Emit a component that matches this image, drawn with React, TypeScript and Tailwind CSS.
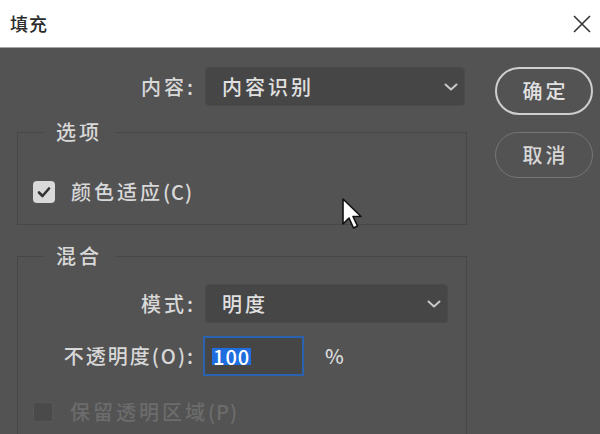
const font = { fontFamily: '"Noto Sans CJK SC", "Noto Sans", sans-serif' };

const Chevron = () => (
  <svg width="14" height="8" viewBox="0 0 14 8" className="shrink-0">
    <path d="M1.5 1.5 L7 6.5 L12.5 1.5" fill="none" stroke="#c9c9c9" strokeWidth="2" strokeLinecap="round" strokeLinejoin="round" />
  </svg>
);

const Select = ({ value, width }: { value: string; width: string }) => (
  <div className={`${width} h-[39px] rounded-[4px] bg-[#464646] border border-[#4b4b4b] flex items-center justify-between pl-[16px] pr-[6px]`}>
    <span className="text-[20px] tracking-[3px] font-medium text-[#e0e0e0]">{value}</span>
    <Chevron />
  </div>
);

const App = () => {
  return (
    <div style={font} className="relative w-[600px] h-[434px] overflow-hidden bg-[#535353] select-none">
      {/* title bar */}
      <div className="h-[48px] bg-white border-b border-[#a3a3a3] flex items-center justify-between pl-[10px] pr-[8px]">
        <span className="text-[18px] text-[#2b2b2b] tracking-[1px] font-medium">填充</span>
        <svg width="20" height="20" viewBox="0 0 20 20">
          <path d="M2 2 L18 18 M18 2 L2 18" stroke="#333" strokeWidth="1.6" />
        </svg>
      </div>

      <div className="flex pl-[17px] pt-[19px]">
        {/* left column */}
        <div className="w-[450px] flex flex-col">
          <div className="flex items-center gap-[9px]">
            <span className="w-[179px] text-right text-[20px] tracking-[3px] font-medium text-[#d8d8d8]">内容:</span>
            <Select value="内容识别" width="w-[260px]" />
          </div>

          <fieldset className="mt-[13px] border border-[#474747] pl-[15px] pb-[17px]">
            <legend className="ml-[10px] px-[13px] h-[26px] leading-[26px] text-[20px] tracking-[3px] font-medium text-[#d8d8d8]">选项</legend>
            <div className="mt-[32px] flex items-center gap-[16px]">
              <div className="w-[22px] h-[22px] rounded-[4px] bg-[#d9d9d9] flex items-center justify-center">
                <svg width="14" height="12" viewBox="0 0 14 12">
                  <path d="M2 6.5 L5.5 10 L12 2.5" fill="none" stroke="#333" strokeWidth="2.6" strokeLinecap="round" strokeLinejoin="round" />
                </svg>
              </div>
              <span className="text-[20px] tracking-[3px] font-medium text-[#d8d8d8]">颜色适应<span className="tracking-[1px]">(C)</span></span>
            </div>
          </fieldset>

          <fieldset className="mt-[18px] border border-[#474747] pl-[15px] pb-[40px]">
            <legend className="ml-[10px] px-[13px] h-[26px] leading-[26px] text-[20px] tracking-[3px] font-medium text-[#d8d8d8]">混合</legend>
            <div className="mt-[15px] flex items-center gap-[9px]">
              <span className="w-[163px] text-right text-[20px] tracking-[3px] font-medium text-[#d8d8d8]">模式:</span>
              <Select value="明度" width="w-[243px]" />
            </div>
            <div className="mt-[13px] flex items-center">
              <span className="w-[162px] text-right text-[20px] tracking-[2px] font-medium text-[#d8d8d8] whitespace-nowrap">不透明度(O):</span>
              <div className="ml-[8px] w-[101px] h-[40px] bg-[#464646] border-2 border-[#2a62b0] flex items-center pl-[7px]">
                <span className="bg-[#1f6ee0] text-white text-[20px] leading-[17px] h-[17px] px-[1px] tracking-[1px] font-medium">100</span>
              </div>
              <span className="ml-[21px] text-[20px] font-medium text-[#d8d8d8]">%</span>
            </div>
            <div className="mt-[21px] flex items-center gap-[17px]">
              <div className="w-[20px] h-[20px] rounded-[3px] bg-[#4a4a4a] border border-[#575757]" />
              <span className="text-[20px] tracking-[3px] font-medium text-[#6c6c6c]">保留透明区域<span className="tracking-[1px]">(P)</span></span>
            </div>
          </fieldset>
        </div>

        {/* buttons */}
        <div className="ml-[28px] w-[98px] flex flex-col gap-[17px]">
          <button className="h-[48px] rounded-full border-2 border-[#cfcfcf] text-[20px] tracking-[3px] font-medium text-[#e2e2e2] pl-[3px]">确定</button>
          <button className="h-[46px] rounded-full border-[1.5px] border-[#767676] text-[20px] tracking-[3px] font-medium text-[#d8d8d8] pl-[3px]">取消</button>
        </div>
      </div>

      {/* mouse pointer */}
      <svg className="absolute left-[341px] top-[197px]" width="24" height="36" viewBox="0 0 24 36">
        <path d="M2 2 L2 27 L8 21 L12.5 31 L16.5 29 L12 19.5 L20 19.5 Z" fill="#fff" stroke="#111" strokeWidth="1.6" strokeLinejoin="round" />
      </svg>
    </div>
  );
};

export default App;
